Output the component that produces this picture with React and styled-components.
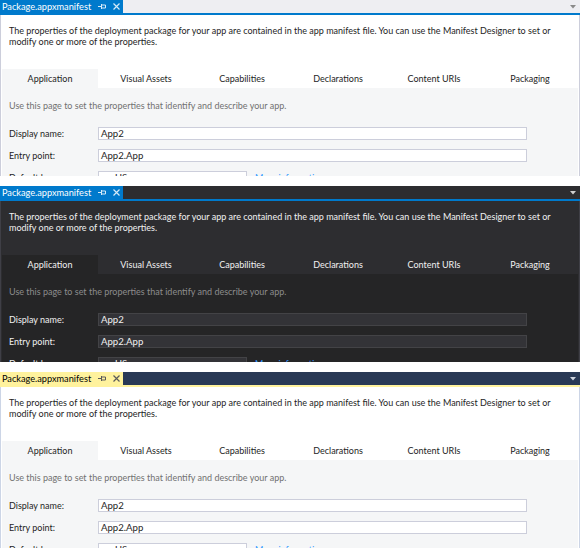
import React from "react";
import styled, { createGlobalStyle } from "styled-components";

const themes = {
  light: {
    bar: "#eeeef2",
    accent: "#007acc",
    tabText: "#ffffff",
    tabIcon: "#d6ebf8",
    arrow: "#8a8a8a",
    frame: "#cccedb",
    body: "#ffffff",
    strip: "#ffffff",
    panel: "#f5f6f7",
    text: "#1e1e1e",
    hint: "#717171",
    inputBg: "#ffffff",
    inputBorder: "#cccedb",
    inputText: "#1e1e1e",
    link: "#3399ff",
  },
  dark: {
    bar: "#2d2d30",
    accent: "#007acc",
    tabText: "#ffffff",
    tabIcon: "#d6ebf8",
    arrow: "#d0d0d0",
    frame: "#3f3f46",
    body: "#2d2d30",
    strip: "#2d2d30",
    panel: "#252526",
    text: "#f1f1f1",
    hint: "#8c8c8c",
    inputBg: "#333337",
    inputBorder: "#434346",
    inputText: "#f1f1f1",
    link: "#3399ff",
  },
  blue: {
    bar: "#293955",
    accent: "#fff29d",
    tabText: "#000000",
    tabIcon: "#5a5a5a",
    arrow: "#ced4dd",
    frame: "#ccd5e6",
    body: "#ffffff",
    strip: "#ffffff",
    panel: "#f5f6f7",
    text: "#1e1e1e",
    hint: "#717171",
    inputBg: "#ffffff",
    inputBorder: "#cccedb",
    inputText: "#1e1e1e",
    link: "#3399ff",
  },
};

const GlobalStyle = createGlobalStyle`
  body {
    margin: 0;
    background: #ffffff;
    font-family: Lato, "Open Sans", sans-serif;
  }
`;

const Page = styled.div`
  display: flex;
  flex-direction: column;
  gap: 10px;
  width: 580px;
`;

const Window = styled.section`
  height: 176px;
  overflow: hidden;
`;

const TabBar = styled.div`
  display: flex;
  height: 13px;
  background: ${(p) => p.t.bar};
  border-bottom: 2px solid ${(p) => p.t.accent};
`;

const DocTab = styled.div`
  flex: 0 0 121px;
  padding-left: 2px;
  display: flex;
  align-items: center;
  gap: 7px;
  background: ${(p) => p.t.accent};
  color: ${(p) => p.t.tabText};
  font-size: 9.2px;
  white-space: nowrap;
  overflow: hidden;
`;

const TabIcons = styled.span`
  display: flex;
  align-items: center;
  gap: 7px;
  color: ${(p) => p.t.tabIcon};
`;

const BarFill = styled.div`
  flex: 1;
  display: flex;
  justify-content: flex-end;
  align-items: center;
  padding-right: 4px;
  color: ${(p) => p.t.arrow};
`;

const Body = styled.div`
  height: 161px;
  padding: 0 1px;
  background: ${(p) => p.t.body};
  border-left: 1px solid ${(p) => p.t.frame};
  border-right: 1px solid ${(p) => p.t.frame};
`;

const Intro = styled.p`
  margin: 0;
  height: 54px;
  box-sizing: border-box;
  padding: 10px 0 0 7px;
  font-size: 9px;
  line-height: 11px;
  white-space: nowrap;
  color: ${(p) => p.t.text};
`;

const TabStrip = styled.div`
  display: grid;
  grid-template-columns: repeat(6, 1fr);
  height: 19px;
  background: ${(p) => p.t.strip};
`;

const SectionTab = styled.div`
  display: flex;
  align-items: center;
  justify-content: center;
  font-size: 9px;
  color: ${(p) => p.t.text};
  background: ${(p) => (p.$active ? p.t.panel : "transparent")};
`;

const Content = styled.div`
  height: 100%;
  padding: 12px 7px 0;
  background: ${(p) => p.t.panel};
`;

const Hint = styled.div`
  font-size: 9px;
  line-height: 11px;
  color: ${(p) => p.t.hint};
  margin-bottom: 16px;
`;

const Form = styled.div`
  display: flex;
  flex-direction: column;
  gap: 9px;
`;

const Row = styled.div`
  display: grid;
  grid-template-columns: 89px ${(p) => p.$width || "429px"} auto;
  align-items: center;
`;

const Label = styled.span`
  font-size: 9px;
  color: ${(p) => p.t.text};
`;

const Field = styled.div`
  height: 13px;
  box-sizing: border-box;
  padding-left: 2px;
  display: flex;
  align-items: center;
  font-size: 9.6px;
  color: ${(p) => p.t.inputText};
  background: ${(p) => p.t.inputBg};
  border: 1px solid ${(p) => p.t.inputBorder};
`;

const Link = styled.span`
  margin-left: 8px;
  font-size: 9px;
  color: ${(p) => p.t.link};
`;

const PinIcon = () => (
  <svg width="8" height="7" viewBox="0 0 8 7" fill="none" stroke="currentColor" strokeWidth="1">
    <path d="M0 3.5H3M3.5 1V6M3.5 2H7.5V5H3.5" />
  </svg>
);

const CloseIcon = () => (
  <svg width="7" height="7" viewBox="0 0 7 7" stroke="currentColor" strokeWidth="1.2">
    <path d="M0.5 0.5L6.5 6.5M6.5 0.5L0.5 6.5" />
  </svg>
);

const DropArrow = () => (
  <svg width="6" height="4" viewBox="0 0 6 4" fill="currentColor">
    <path d="M0 0H6L3 3.5Z" />
  </svg>
);

const sections = [
  "Application",
  "Visual Assets",
  "Capabilities",
  "Declarations",
  "Content URIs",
  "Packaging",
];

function ManifestWindow({ t }) {
  return (
    <Window>
      <TabBar t={t}>
        <DocTab t={t}>
          Package.appxmanifest
          <TabIcons t={t}>
            <PinIcon />
            <CloseIcon />
          </TabIcons>
        </DocTab>
        <BarFill t={t}>
          <DropArrow />
        </BarFill>
      </TabBar>
      <Body t={t}>
        <Intro t={t}>
          The properties of the deployment package for your app are contained in the app
          manifest file. You can use the Manifest Designer to set or
          <br />
          modify one or more of the properties.
        </Intro>
        <TabStrip t={t}>
          {sections.map((s, i) => (
            <SectionTab key={s} t={t} $active={i === 0}>
              {s}
            </SectionTab>
          ))}
        </TabStrip>
        <Content t={t}>
          <Hint t={t}>Use this page to set the properties that identify and describe your app.</Hint>
          <Form>
            <Row>
              <Label t={t}>Display name:</Label>
              <Field t={t}>App2</Field>
            </Row>
            <Row>
              <Label t={t}>Entry point:</Label>
              <Field t={t}>App2.App</Field>
            </Row>
            <Row $width="149px">
              <Label t={t}>Default language:</Label>
              <Field t={t}>en-US</Field>
              <Link t={t}>More information</Link>
            </Row>
          </Form>
        </Content>
      </Body>
    </Window>
  );
}

export default function App() {
  return (
    <>
      <GlobalStyle />
      <Page>
        <ManifestWindow t={themes.light} />
        <ManifestWindow t={themes.dark} />
        <ManifestWindow t={themes.blue} />
      </Page>
    </>
  );
}
